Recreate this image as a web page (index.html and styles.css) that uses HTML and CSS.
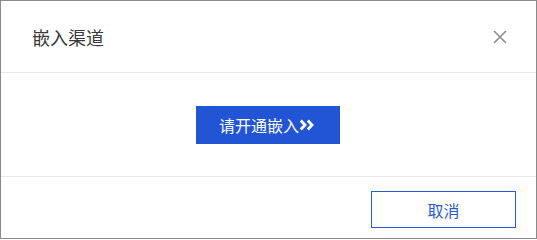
FILE: index.html
```html
<!DOCTYPE html>
<html lang="zh">
<head>
<meta charset="utf-8">
<title>嵌入渠道</title>
<link rel="stylesheet" href="styles.css">
</head>
<body>
<div class="dialog">
  <div class="dialog-header">
    <span class="dialog-title">嵌入渠道</span>
    <span class="dialog-close" aria-label="关闭">
      <svg width="14" height="14" viewBox="0 0 14 14"><path d="M1 1L13 13M13 1L1 13" stroke="#8c8c8c" stroke-width="1.6" fill="none"/></svg>
    </span>
  </div>
  <div class="dialog-body">
    <button class="btn-primary">请开通嵌入<svg class="chev" width="16" height="12" viewBox="0 0 16 12"><path d="M1.8 1.5L6 6L1.8 10.5M8.8 1.5L13 6L8.8 10.5" stroke="#fff" stroke-width="2.8" fill="none"/></svg></button>
  </div>
  <div class="dialog-footer">
    <button class="btn-outline">取消</button>
  </div>
</div>
</body>
</html>
```
FILE: styles.css
```css
html, body {
  margin: 0;
  padding: 0;
  background: #fff;
}
body {
  font-family: "Noto Sans CJK SC", "Noto Sans", sans-serif;
}
.dialog {
  width: 537px;
  height: 239px;
  box-sizing: border-box;
  border: 1px solid #8a8a8a;
  display: flex;
  flex-direction: column;
}
.dialog-header {
  height: 71px;
  border-bottom: 1px solid #e8e8e8;
  display: flex;
  align-items: center;
  justify-content: space-between;
  padding: 0 29px 0 31px;
}
.dialog-title {
  font-size: 18px;
  color: #3a3a3a;
  line-height: 1;
}
.dialog-close {
  display: flex;
  cursor: pointer;
}
.dialog-body {
  height: 103px;
  border-bottom: 1px solid #e8e8e8;
  display: flex;
  align-items: center;
  justify-content: center;
}
.btn-primary {
  width: 144px;
  height: 38px;
  margin-right: 1px;
  border: 0;
  background: #2254d6;
  color: #fff;
  font-family: inherit;
  font-size: 16px;
  display: flex;
  align-items: center;
  justify-content: center;
  padding: 0 2px 0 0;
  cursor: pointer;
}
.chev {
  margin-left: 0;
}
.dialog-footer {
  flex: 1;
  display: flex;
  justify-content: flex-end;
  align-items: flex-start;
  padding: 14px 20px 0 0;
}
.btn-outline {
  width: 145px;
  height: 37px;
  border: 1px solid #2a5bd7;
  background: #fff;
  color: #2a5bd7;
  font-family: inherit;
  font-size: 16px;
  cursor: pointer;
  padding: 0;
}
```
